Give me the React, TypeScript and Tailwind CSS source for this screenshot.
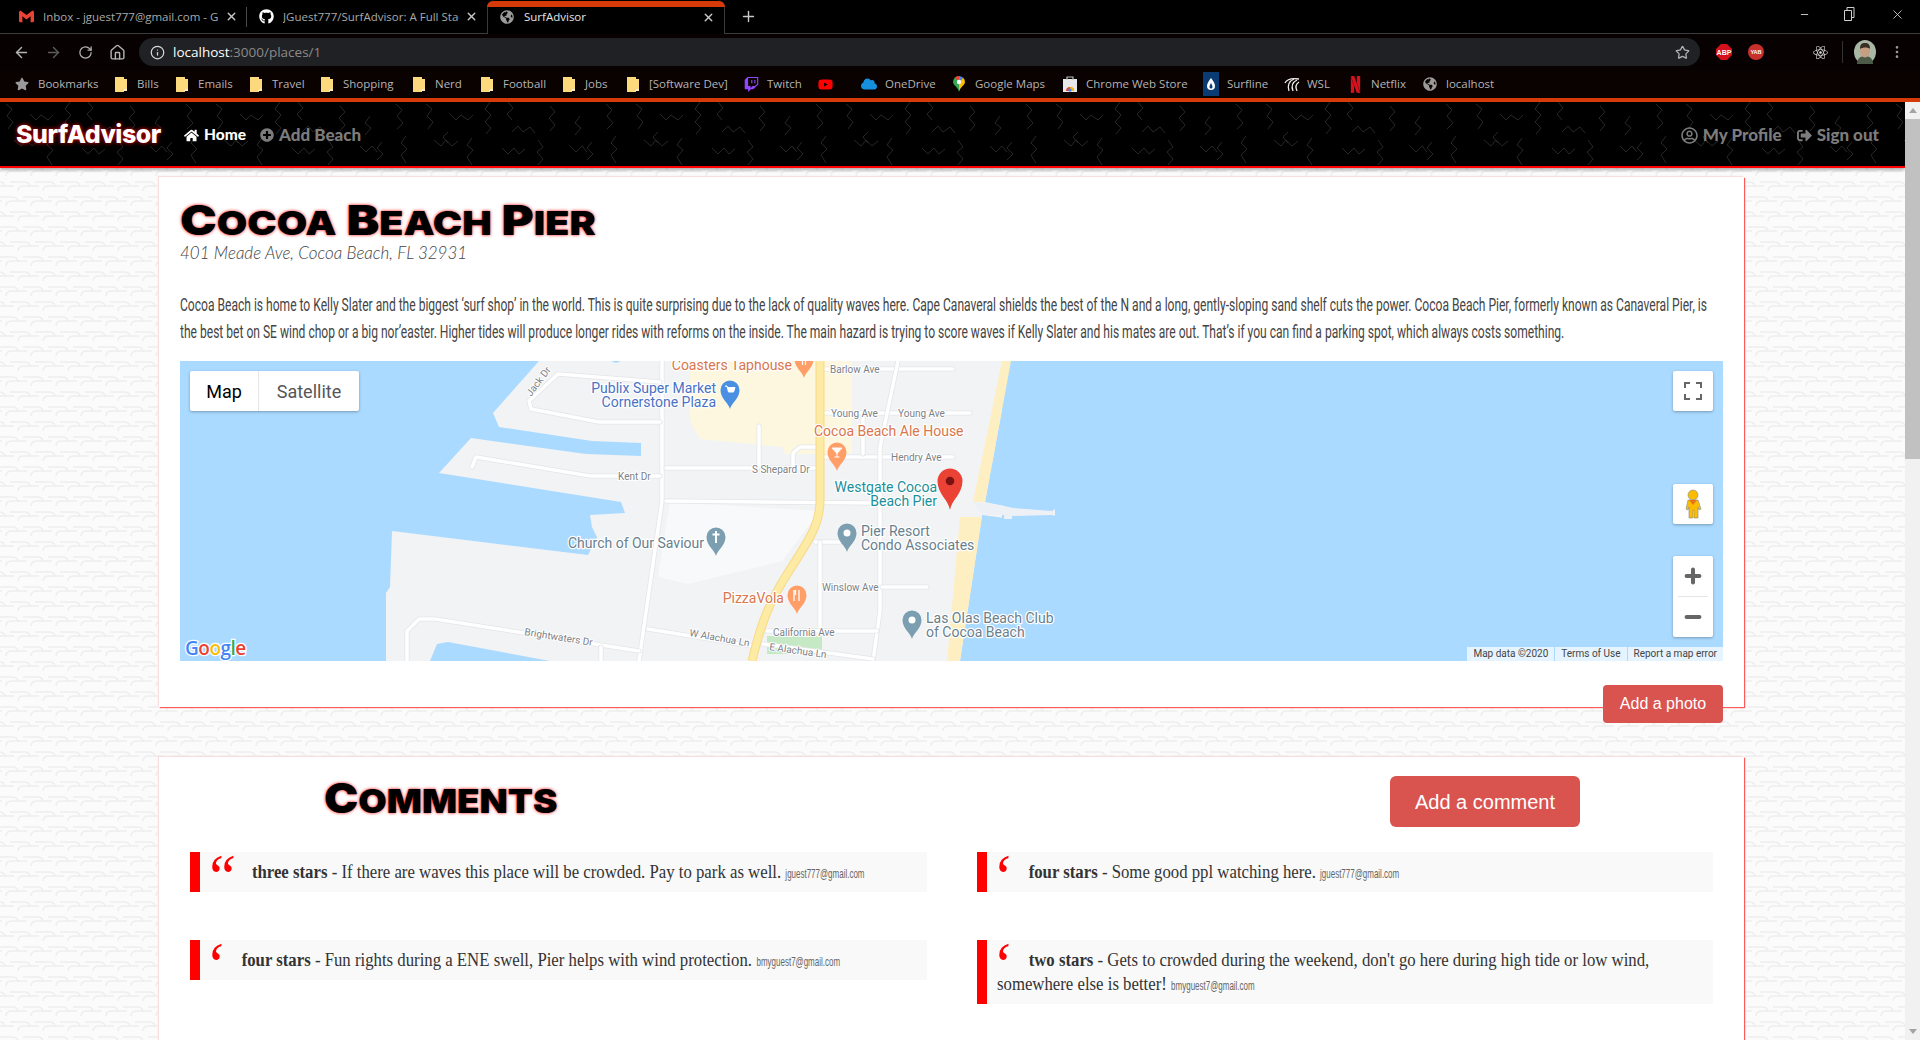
import type { ReactNode } from "react";
import { ArrowLeft, ArrowRight, EllipsisVertical, House, Info, Minus, Plus, RotateCw, Star, X } from "lucide-react";
import { FaCloud, FaGithub, FaGlobeAmericas, FaHome, FaPlusCircle, FaReact, FaRegUserCircle, FaSignOutAlt, FaStar, FaTwitch, FaYoutube } from "react-icons/fa";
import { SiGmail, SiNetflix } from "react-icons/si";

function Folder() {
  return (
    <svg width="12" height="16" viewBox="0 0 12 16">
      <path d="M0 1h9v2h3v12H9v1H0z" fill="#fdd97e" />
      <path d="M9 15v-1h3" fill="none" stroke="#fff" strokeWidth="1" />
    </svg>
  );
}

function MapsPin() {
  return (
    <svg width="12" height="16" viewBox="0 0 12 16">
      <path d="M6 16C5 11 0 9 0 6a6 6 0 0 1 6-6z" fill="#34a853" />
      <path d="M6 16c1-5 6-7 6-10a6 6 0 0 0-2-4.400L6 6z" fill="#fbbc04" />
      <path d="M6 0a6 6 0 0 1 4 1.600L6 6z" fill="#4285f4" />
      <path d="M6 0a6 6 0 0 0-4.300 1.800L6 6z" fill="#ea4335" />
      <circle cx="6" cy="6" r="2.200" fill="#fff" />
    </svg>
  );
}

function StoreBag() {
  return (
    <svg width="14" height="16" viewBox="0 0 14 16">
      <rect x="0" y="3" width="14" height="13" fill="#e8e8e8" />
      <path d="M4 4V1h6v3" fill="none" stroke="#bbb" strokeWidth="1.200" />
      <path d="M3 15a4 4 0 0 1 8 0z" fill="#ea4335" />
      <path d="M7 15v-4a4 4 0 0 1 4 4z" fill="#fbbc04" />
      <circle cx="7" cy="14" r="1.700" fill="#4285f4" />
    </svg>
  );
}

function SurflineIcon() {
  return (
    <svg width="16" height="24" viewBox="0 0 16 24">
      <rect width="16" height="24" fill="#0b3b73" />
      <path d="M8 6c2 3 4 5 4 8a4 4 0 0 1-8 0c0-3 2-5 4-8z" fill="#fff" />
      <path d="M8 11c1 2 1.500 3 1.500 4a1.500 1.500 0 0 1-3 0c0-1 .5-2 1.500-4z" fill="#0b3b73" />
    </svg>
  );
}

function WslIcon() {
  return (
    <svg width="16" height="16" viewBox="0 0 16 16" fill="none" stroke="#eee" strokeWidth="1.300">
      <path d="M1 7c2-4 7-5 14-4" />
      <path d="M5 15C3 10 5 5 10 3" />
      <path d="M9 15C7 10 9 6 13 4" />
      <path d="M13 15c-2-4-1-7 2-9" />
    </svg>
  );
}

const bookmarks: { label: string; item: string; box: string; icon: ReactNode }[] = [
  { label: "Bookmarks", item: "w-[100px]", box: "w-[23px]", icon: <FaStar className="text-[14px] text-[#9a9a9a]" /> },
  { label: "Bills", item: "w-[61px]", box: "w-[22px]", icon: <Folder /> },
  { label: "Emails", item: "w-[74px]", box: "w-[22px]", icon: <Folder /> },
  { label: "Travel", item: "w-[71px]", box: "w-[22px]", icon: <Folder /> },
  { label: "Shopping", item: "w-[92px]", box: "w-[22px]", icon: <Folder /> },
  { label: "Nerd", item: "w-[68px]", box: "w-[22px]", icon: <Folder /> },
  { label: "Football", item: "w-[82px]", box: "w-[22px]", icon: <Folder /> },
  { label: "Jobs", item: "w-[64px]", box: "w-[22px]", icon: <Folder /> },
  { label: "[Software Dev]", item: "w-[117px]", box: "w-[22px]", icon: <Folder /> },
  { label: "Twitch", item: "w-[74px]", box: "w-[23px]", icon: <FaTwitch className="text-[15px] text-[#9146ff]" /> },
  { label: "", item: "w-[43px]", box: "w-[23px]", icon: <FaYoutube className="text-[15px] text-[#f00]" /> },
  { label: "OneDrive", item: "w-[92px]", box: "w-[24px]", icon: <FaCloud className="text-[16px] text-[#1490df]" /> },
  { label: "Google Maps", item: "w-[110px]", box: "w-[22px]", icon: <MapsPin /> },
  { label: "Chrome Web Store", item: "w-[140px]", box: "w-[23px]", icon: <StoreBag /> },
  { label: "Surfline", item: "w-[81px]", box: "w-[24px]", icon: <SurflineIcon /> },
  { label: "WSL", item: "w-[66px]", box: "w-[23px]", icon: <WslIcon /> },
  { label: "Netflix", item: "w-[73px]", box: "w-[21px]", icon: <SiNetflix className="text-[17px] text-[#d8121c] -ml-[3px]" /> },
  { label: "localhost", item: "w-[90px]", box: "w-[23px]", icon: <FaGlobeAmericas className="text-[14px] text-[#9a9a9a]" /> },
];

function Tab(props: { width: string; icon: ReactNode; label: string; active?: boolean; divider?: boolean }) {
  return (
    <div
      className={
        props.active
          ? "relative -mb-px flex h-[34px] items-center rounded-t-[8px] border-x border-[#3a3a3a] bg-black pl-[12px] pr-[9px] " + props.width
          : "relative flex h-[33px] items-center pl-[12px] pr-[9px] " + props.width
      }
    >
      {props.active && <div className="absolute -left-px -right-px top-px h-[6px] rounded-t-[8px] bg-[#d63a08]" />}
      <div className="flex w-[24px] shrink-0 items-center">{props.icon}</div>
      <div className={props.active ? "flex-1 overflow-hidden whitespace-nowrap text-[#e4e4e4]" : "flex-1 overflow-hidden whitespace-nowrap text-[#a8a8a8]"}>
        {props.label}
      </div>
      <X size={13} strokeWidth={2.5} className="ml-[6px] shrink-0 text-[#c8c8c8]" />
      {props.divider && <div className="absolute right-0 top-[7px] h-[20px] w-px bg-[#4a4a4a]" />}
    </div>
  );
}

function BrowserChrome() {
  return (
    <div className="font-['Open_Sans',sans-serif] text-[11.5px]">
      <div className="flex h-[34px] items-start border-b border-[#3c3c3c] bg-black pl-[7px]">
        <Tab width="w-[240px]" label="Inbox - jguest777@gmail.com - Gmail" divider icon={<SiGmail className="text-[15px] text-[#ea4335]" />} />
        <Tab width="w-[240px]" label="JGuest777/SurfAdvisor: A Full Stack" icon={<FaGithub className="text-[15px] text-white" />} />
        <Tab width="w-[238px]" label="SurfAdvisor" active icon={<FaGlobeAmericas className="text-[14px] text-[#9a9a9a]" />} />
        <div className="flex h-[33px] w-[46px] items-center justify-center">
          <Plus size={17} className="text-[#c8c8c8]" />
        </div>
        <div className="ml-auto flex h-[28px] items-center text-[#d0d0d0]">
          <Minus size={11} className="mr-[34px]" />
          <svg width="11" height="14" viewBox="0 0 11 14" fill="none" stroke="currentColor" strokeWidth="1" className="mr-[35px]">
            <path d="M.5 3.500h7v10h-7zM3 3.500V.5h7v10H7.500" />
          </svg>
          <X size={15} strokeWidth={1.4} className="mr-[15px]" />
        </div>
      </div>

      <div className="flex h-[36px] items-start bg-[#080101] pl-[5px] pt-[4px]">
        <div className="flex h-[28px] w-[32px] items-center justify-center text-[#b4b4b4]"><ArrowLeft size={17} /></div>
        <div className="flex h-[28px] w-[32px] items-center justify-center text-[#5c5c5c]"><ArrowRight size={17} /></div>
        <div className="flex h-[28px] w-[32px] items-center justify-center text-[#b4b4b4]"><RotateCw size={15} /></div>
        <div className="flex h-[28px] w-[32px] items-center justify-center text-[#b4b4b4]"><House size={17} /></div>
        <div className="ml-[6px] flex h-[28px] w-[1561px] items-center rounded-full bg-[#202124] pl-[11px] pr-[10px]">
          <Info size={15} className="mr-[8px] text-[#d8d8d8]" />
          <span className="text-[13.5px] text-white">localhost</span>
          <span className="text-[13.5px] text-[#8a8a8a]">:3000/places/1</span>
          <Star size={15} className="ml-auto text-[#b4b4b4]" />
        </div>
        <div className="ml-[8px] flex h-[28px] w-[32px] items-center justify-center">
          <svg width="16" height="16" viewBox="0 0 16 16">
            <path d="M5 0h6l5 5v6l-5 5H5l-5-5V5z" fill="#d3101c" />
            <text x="8" y="10.500" textAnchor="middle" fontSize="7" fontWeight="700" fill="#fff" fontFamily="Liberation Sans">ABP</text>
          </svg>
        </div>
        <div className="flex h-[28px] w-[32px] items-center justify-center">
          <svg width="16" height="16" viewBox="0 0 16 16">
            <circle cx="8" cy="8" r="8" fill="#c8302c" />
            <text x="8" y="10.200" textAnchor="middle" fontSize="5.500" fontWeight="700" fill="#fff" fontFamily="Liberation Sans">YAB</text>
          </svg>
        </div>
        <div className="ml-[32px] flex h-[28px] w-[32px] items-center justify-center text-[#d8d8d8]"><FaReact className="text-[15px]" /></div>
        <div className="ml-[6px] mt-[3px] h-[22px] w-px bg-[#333]" />
        <div className="ml-[6px] flex h-[28px] w-[32px] items-center justify-center">
          <svg width="22" height="24" viewBox="0 0 22 24">
            <ellipse cx="11" cy="12" rx="11" ry="12" fill="#a9b8a4" />
            <path d="M3 24c0-6 4-8 8-8s8 2 8 8z" fill="#4c5a48" />
            <ellipse cx="11" cy="11" rx="5" ry="6.500" fill="#c79f82" />
            <path d="M6 9c0-5 2-6 5-6s5 1 5 6c-2-2-7-2-10 0z" fill="#3a2f25" />
          </svg>
        </div>
        <div className="flex h-[28px] w-[32px] items-center justify-center text-[#9a9a9a]"><EllipsisVertical size={16} /></div>
      </div>

      <div className="flex h-[28px] items-center bg-[#0a0101] pl-[15px] text-[#b4b4b4]">
        {bookmarks.map((b) => (
          <div key={b.label + b.item} className={"flex shrink-0 items-center whitespace-nowrap " + b.item}>
            <div className={"flex shrink-0 items-center " + b.box}>{b.icon}</div>
            {b.label}
          </div>
        ))}
      </div>
      <div className="h-[4px] bg-[#d63a08]" />
    </div>
  );
}

function NavTexture() {
  return (
    <svg className="absolute inset-0 h-full w-full" aria-hidden="true">
      <defs>
        <pattern id="squiggle" width="210" height="64" patternUnits="userSpaceOnUse">
          <g fill="none" stroke="#262626" strokeWidth="1">
            <path d="M6 2l6 5-5 7 6 6-5 7" />
            <path d="M30 12l6 6 5-5 7 5 5-5" />
            <path d="M70 0l-5 7 6 6-6 7 6 6-5 6" />
            <path d="M92 30l6-6 5 6 7-5 5 6" />
            <path d="M130 4l5 6-6 6 6 7-5 6" />
            <path d="M160 14l-5 7 6 5-6 7" />
            <path d="M186 2l6 6-5 6 6 7-6 6" />
            <path d="M14 38l7 6 5-6 6 6 6-5" />
            <path d="M52 36l-5 7 6 5-6 7 5 8" />
            <path d="M82 46l6 6 6-6 5 6 6-5" />
            <path d="M118 38l5 7-6 5 6 7-5 6" />
            <path d="M150 44l6 6 6-6 5 6" />
            <path d="M196 34l-5 7 6 6-6 6 5 8" />
            <path d="M88 0l5 6-6 6 5 6" />
            <path d="M172 40l-5 6 6 6-6 6" />
            <path d="M28 30l-5 5 5 6" />
          </g>
        </pattern>
      </defs>
      <rect width="100%" height="100%" fill="url(#squiggle)" />
    </svg>
  );
}

function NavBar() {
  const idle = "flex items-center gap-[5px] text-[#7c7c7c]";
  return (
    <div className="relative flex h-[66px] items-center border-b-2 border-[#f00] bg-black pt-[2px] font-['Lato',sans-serif] text-[17px] font-black shadow-[0_2px_3px_rgba(0,0,0,0.3)]">
      <NavTexture />
      <div className="relative ml-[16px] flex w-[168px] font-['Inter',sans-serif] text-[25px] font-extrabold tracking-[-0.5px] text-white [text-shadow:0_0_4px_#f00]">
        SurfAdvisor
      </div>
      <div className="relative flex items-center gap-[5px] text-[15.5px] text-white">
        <FaHome className="text-[15px]" />
        Home
      </div>
      <div className={"relative ml-[14px] " + idle}>
        <FaPlusCircle className="text-[14px]" />
        Add Beach
      </div>
      <div className={"relative ml-auto " + idle}>
        <FaRegUserCircle className="text-[17px]" />
        My Profile
      </div>
      <div className={"relative ml-[15px] mr-[26px] " + idle}>
        <FaSignOutAlt className="text-[15px]" />
        Sign out
      </div>
    </div>
  );
}

function Pin(props: { x: number; y: number; color: string; children?: ReactNode }) {
  return (
    <g transform={`translate(${props.x} ${props.y})`}>
      <path d="M0 19C-1.500 13-9.500 8.500-9.500 0a9.500 9.500 0 0 1 19 0C9.500 8.500 1.500 13 0 19z" fill={props.color} />
      {props.children ?? <circle r="3.500" fill="#fff" />}
    </g>
  );
}

function Road(props: { d: string }) {
  return (
    <>
      <path d={props.d} fill="none" stroke="#e3e5e8" strokeWidth="5" strokeLinejoin="round" strokeLinecap="round" />
      <path d={props.d} fill="none" stroke="#fff" strokeWidth="3.500" strokeLinejoin="round" strokeLinecap="round" />
    </>
  );
}

function Poi(props: { x: number; y: number; color: string; anchor?: "start" | "end"; children: string }) {
  return (
    <text x={props.x} y={props.y} textAnchor={props.anchor ?? "start"} fontSize="14" fill={props.color} stroke="#fff" strokeWidth="2.500" paintOrder="stroke" strokeLinejoin="round">
      {props.children}
    </text>
  );
}

function Street(props: { x: number; y: number; rotate?: number; children: string }) {
  return (
    <text
      x={props.x}
      y={props.y}
      fontSize="10"
      fill="#7c8187"
      stroke="#fff"
      strokeWidth="2"
      paintOrder="stroke"
      strokeLinejoin="round"
      transform={props.rotate ? `rotate(${props.rotate} ${props.x} ${props.y})` : undefined}
    >
      {props.children}
    </text>
  );
}

function MapDrawing() {
  return (
    <svg className="absolute inset-0 block" width="1543" height="300" viewBox="0 0 1543 300" fontFamily="Roboto, sans-serif">
      <rect width="1543" height="300" fill="#aadaff" />
      <path
        d="M359 0L313 52 319 66 412 80 461 82 461 95 406 93 291 77 259 112 441 141 445 152 410 154 412 166 417 176 408 194 212 170 210 226 206 232 206 300 250 300 257 283 268 281 370 300 822 300 822 0z"
        fill="#f2f3f5"
      />
      <path d="M822 0H1543V300H780L802 154 832 158 832 155 875 155 875 148 833 147 805 141 831 0z" fill="#aadaff" />
      <path d="M793 141L802 154H824V158H832V155L872 154 875 155V148L872 150 833 147 820 144z" fill="#edf1f5" />
      <path d="M822 0H831L805 141 793 141zM780 156H802L780 300H767z" fill="#feefc3" />
      <path d="M431 0H441L436 2z" fill="#aadaff" />
      <path d="M510 0V60L520 78 602 86 605 93H672V0z" fill="#fef7e0" />
      <path d="M490 141L640 150 602 200 508 223 478 216z" fill="#f8f9fa" />
      <rect x="587" y="275" width="55" height="18" fill="#c5e8c5" />

      <Road d="M482 0V140L459 300" />
      <Road d="M480 21L378 13 349 40 351 48 419 61H480" />
      <Road d="M292 106L296 96 410 115H480" />
      <Road d="M486 107H636" />
      <Road d="M486 140L695 142" />
      <Road d="M579 65V106" />
      <Road d="M613 106V92L620 86H636" />
      <Road d="M227 300V270L239 258H255L459 290" />
      <Road d="M421 286V300" />
      <Road d="M468 268L578 286" />
      <Road d="M645 8H773" />
      <Road d="M645 52H790" />
      <Road d="M643 96H773" />
      <Road d="M718 0L700 86V250L693 300" />
      <Road d="M683 56V93" />
      <Road d="M635 181H660" />
      <Road d="M640 181V268" />
      <Road d="M702 226H747" />
      <Road d="M587 270H697" />
      <Road d="M583 283L693 298" />
      <path d="M640 0V140C640 170 620 190 600 225 585 250 578 275 572 300" fill="none" stroke="#f7d98a" strokeWidth="9" />
      <path d="M640 0V140C640 170 620 190 600 225 585 250 578 275 572 300" fill="none" stroke="#fdeaa3" strokeWidth="7" />

      <Street x={351} y={36} rotate={-53}>Jack Dr</Street>
      <Street x={438} y={119}>Kent Dr</Street>
      <Street x={572} y={112}>S Shepard Dr</Street>
      <Street x={650} y={12}>Barlow Ave</Street>
      <Street x={651} y={56}>Young Ave</Street>
      <Street x={718} y={56}>Young Ave</Street>
      <Street x={711} y={100}>Hendry Ave</Street>
      <Street x={642} y={230}>Winslow Ave</Street>
      <Street x={593} y={275}>California Ave</Street>
      <Street x={589} y={289} rotate={8}>E Alachua Ln</Street>
      <Street x={509} y={275} rotate={10}>W Alachua Ln</Street>
      <Street x={344} y={274} rotate={9}>Brightwaters Dr</Street>

      <Poi x={612} y={9} anchor="end" color="#d9764d">Coasters Taphouse</Poi>
      <Poi x={536} y={32} anchor="end" color="#4a72c4">Publix Super Market</Poi>
      <Poi x={536} y={46} anchor="end" color="#4a72c4">Cornerstone Plaza</Poi>
      <Poi x={524} y={187} anchor="end" color="#68808e">Church of Our Saviour</Poi>
      <Poi x={604} y={242} anchor="end" color="#d9764d">PizzaVola</Poi>
      <Poi x={634} y={75} color="#d9764d">Cocoa Beach Ale House</Poi>
      <Poi x={757} y={131} anchor="end" color="#1a8f9c">Westgate Cocoa</Poi>
      <Poi x={757} y={145} anchor="end" color="#1a8f9c">Beach Pier</Poi>
      <Poi x={681} y={175} color="#68808e">Pier Resort</Poi>
      <Poi x={681} y={189} color="#68808e">Condo Associates</Poi>
      <Poi x={746} y={262} color="#68808e">Las Olas Beach Club</Poi>
      <Poi x={746} y={276} color="#68808e">of Cocoa Beach</Poi>

      <Pin x={624} y={-2} color="#ff9e67"><path d="M-3 -1h6M-1.500 0V6M1.500 0V6" stroke="#fff" strokeWidth="1.200" /></Pin>
      <Pin x={550} y={29} color="#4a90e2"><path d="M-5-4h2l1.500 6h5l1.500-4.500h-7" fill="#fff" stroke="#fff" strokeWidth="1" /></Pin>
      <Pin x={536} y={176} color="#7b9eb0"><path d="M0-6V6M-3.500-2.500H3.500" stroke="#fff" strokeWidth="2" /></Pin>
      <Pin x={617} y={234} color="#ff9e67"><path d="M-3-5V0M-1.500-5V0M-3-1V6M2-5V6" stroke="#fff" strokeWidth="1.300" /></Pin>
      <Pin x={657} y={91} color="#ff9e67"><path d="M-5-4H5L0 1.500zM0 1V5M-2.500 5H2.500" fill="#fff" stroke="#fff" strokeWidth="1" /></Pin>
      <Pin x={667} y={172} color="#7b9eb0" />
      <Pin x={732} y={259} color="#7b9eb0" />

      <g transform="translate(770 120)">
        <path d="M0 29C-1.500 19-12.500 13-12.500 0a12.500 12.500 0 0 1 25 0C12.500 13 1.500 19 0 29z" fill="#ea4335" />
        <circle r="4.300" fill="#7a1212" />
      </g>

      <text x="5" y="294" fontFamily="Open Sans, sans-serif" fontSize="19" fontWeight="600" stroke="#fff" strokeWidth="2.500" paintOrder="stroke" letterSpacing="-0.5">
        <tspan fill="#4285f4">G</tspan>
        <tspan fill="#ea4335">o</tspan>
        <tspan fill="#fbbc04">o</tspan>
        <tspan fill="#4285f4">g</tspan>
        <tspan fill="#34a853">l</tspan>
        <tspan fill="#ea4335">e</tspan>
      </text>
    </svg>
  );
}

function MapPanel() {
  const ctrl = "absolute left-[1493px] flex w-[40px] items-center justify-center rounded-[2px] bg-white shadow-[0_1px_3px_rgba(0,0,0,0.3)]";
  return (
    <div className="relative h-[300px] w-[1543px] overflow-hidden font-['Roboto',sans-serif]">
      <MapDrawing />
      <div className="absolute left-[10px] top-[10px] flex h-[40px] rounded-[2px] bg-white text-[18px] shadow-[0_1px_3px_rgba(0,0,0,0.3)]">
        <div className="flex w-[69px] items-center justify-center border-r border-[#e6e6e6] text-black">Map</div>
        <div className="flex w-[100px] items-center justify-center text-[#565656]">Satellite</div>
      </div>
      <div className={ctrl + " top-[10px] h-[40px]"}>
        <svg width="18" height="18" viewBox="0 0 18 18" fill="none" stroke="#666" strokeWidth="2">
          <path d="M1 6V1h5M12 1h5v5M17 12v5h-5M6 17H1v-5" />
        </svg>
      </div>
      <div className={ctrl + " top-[123px] h-[40px]"}>
        <svg width="20" height="30" viewBox="0 0 20 30">
          <circle cx="10" cy="6" r="5" fill="#fbbc04" stroke="#8a8a8a" strokeWidth="0.600" />
          <path d="M5 11h10l3 9-2 1-1-3v11h-4v-8h-1v8H6V18l-1 3-2-1z" fill="#fbbc04" stroke="#8a8a8a" strokeWidth="0.600" />
          <path d="M6 11h8l-4 5z" fill="#e8741a" />
        </svg>
      </div>
      <div className={ctrl + " top-[195px] h-[81px] flex-col"}>
        <div className="flex h-[40px] items-center justify-center text-[#666]">
          <Plus size={22} strokeWidth={4} absoluteStrokeWidth />
        </div>
        <div className="h-px w-[30px] bg-[#e6e6e6]" />
        <div className="flex h-[40px] items-center justify-center text-[#666]">
          <Minus size={22} strokeWidth={4} absoluteStrokeWidth />
        </div>
      </div>
      <div className="absolute bottom-0 right-0 flex h-[14px] gap-px text-[10px] leading-[14px] text-[#444]">
        <div className="bg-white/70 px-[6px]">Map data ©2020</div>
        <div className="bg-white/70 px-[6px]">Terms of Use</div>
        <div className="bg-white/70 px-[6px]">Report a map error</div>
      </div>
    </div>
  );
}

function Quote(props: { wide?: boolean; stars: string; text: string; email: string }) {
  return (
    <div className="border-l-[10px] border-[#f00] bg-[#f9f9f9] px-[10px] py-[8px] text-[#333]">
      <div className="w-[758px] origin-left scale-x-[0.931] font-['Liberation_Serif',serif] text-[18px] leading-[24px]">
        <span
          className={
            props.wide
              ? "-ml-[7px] inline-block w-[52px] align-[-20px] text-[64px] italic leading-[0] text-[#f00]"
              : "-ml-[7px] inline-block w-[41px] align-[-20px] text-[64px] italic leading-[0] text-[#f00]"
          }
        >
          {props.wide ? "“" : "‘"}
        </span>
        <b className="font-semibold">{props.stars}</b> - {props.text}{" "}
        <span className="inline-block origin-left scale-x-[0.66] font-['Liberation_Sans',sans-serif] text-[13px] leading-none text-[#666]">{props.email}</span>
      </div>
    </div>
  );
}

function Caps(props: { text: string }) {
  return (
    <>
      {props.text.split(" ").map((word, i) => (
        <span key={word} className="uppercase">
          {i > 0 && " "}
          {word[0]}
          <span className="text-[0.8em]">{word.slice(1)}</span>
        </span>
      ))}
    </>
  );
}

function PageTexture() {
  return (
    <svg className="absolute inset-0 h-full w-full" aria-hidden="true">
      <defs>
        <pattern id="hooks" width="25" height="30" patternUnits="userSpaceOnUse">
          <g fill="none" stroke="#eeeeee" strokeWidth="1.500">
            <path d="M-2 5H12Q18 5 18 10" />
            <path d="M23 5H27" />
            <path d="M6 14Q6 9 12 9H27" />
            <path d="M-2 9H2" />
            <path d="M10 20H24Q30 20 30 25" />
            <path d="M-15 20H-1Q5 20 5 25" />
            <path d="M18 29Q18 24 24 24H39" />
            <path d="M-7 29Q-7 24 -1 24H14" />
          </g>
        </pattern>
      </defs>
      <rect width="100%" height="100%" fill="#fbfbfb" />
      <rect width="100%" height="100%" fill="url(#hooks)" />
    </svg>
  );
}

export default function App() {
  const card = "relative ml-[159px] w-[1585px] bg-white shadow-[1px_1px_1px_#ff5a5a,-1px_-1px_1px_#f8dede]";
  const heading = "origin-left font-['Inter',sans-serif] text-[41px] font-black leading-[40px] text-black [text-shadow:0_0_3px_#f00]";
  return (
    <div className="h-[1040px] w-[1920px] overflow-hidden bg-white">
      <BrowserChrome />
      <div className="flex h-[938px]">
        <div className="relative w-[1905px] overflow-hidden">
          <PageTexture />
          <div className="relative">
            <NavBar />
            <div className="h-[9px]" />

            <div className={card + " h-[530px] px-[21px] pt-[23px]"}>
              <h1 className={"scale-x-[1.2] " + heading}>
                <Caps text="Cocoa Beach Pier" />
              </h1>
              <p className="-mt-[2px] font-['Lato',sans-serif] text-[17px] font-light italic leading-[24px] text-[#444]">
                401 Meade Ave, Cocoa Beach, FL 32931
              </p>
              <p className="mb-[16px] mt-[26px] w-[2303px] origin-left scale-x-[0.67] font-['Roboto',sans-serif] text-[18px] leading-[27px] text-[#444]">
                Cocoa Beach is home to Kelly Slater and the biggest ‘surf shop’ in the world. This is quite surprising due to the lack of quality waves here. Cape Canaveral shields the best of the N and a long, gently-sloping sand shelf cuts the power. Cocoa Beach Pier, formerly known as Canaveral Pier, is the best bet on SE wind chop or a big nor’easter. Higher tides will produce longer rides with reforms on the inside. The main hazard is trying to score waves if Kelly Slater and his mates are out. That’s if you can find a parking spot, which always costs something.
              </p>
              <MapPanel />
              <div className="mt-[24px] flex justify-end">
                <div className="flex h-[38px] w-[120px] items-center justify-center rounded-[4px] bg-[#d9534f] font-['Liberation_Sans',sans-serif] text-[16px] text-white">
                  Add a photo
                </div>
              </div>
            </div>

            <div className={card + " mt-[50px] h-[400px]"}>
              <div className="flex items-start pl-[165px] pr-[164px] pt-[19px]">
                <h2 className={"mt-[2px] scale-x-[1.12] " + heading}>
                  <Caps text="Comments" />
                </h2>
                <div className="ml-auto flex h-[51px] w-[190px] items-center justify-center rounded-[6px] bg-[#d9534f] font-['Liberation_Sans',sans-serif] text-[20px] text-white">
                  Add a comment
                </div>
              </div>
              <div className="mt-[25px] grid grid-cols-2 items-start gap-x-[50px] gap-y-[48px] pl-[31px] pr-[31px]">
                <Quote wide stars="three stars" text="If there are waves this place will be crowded. Pay to park as well." email="jguest777@gmail.com" />
                <Quote stars="four stars" text="Some good ppl watching here." email="jguest777@gmail.com" />
                <Quote stars="four stars" text="Fun rights during a ENE swell, Pier helps with wind protection." email="bmyguest7@gmail.com" />
                <Quote stars="two stars" text="Gets to crowded during the weekend, don't go here during high tide or low wind, somewhere else is better!" email="bmyguest7@gmail.com" />
              </div>
            </div>
          </div>
        </div>
        <div className="relative flex w-[15px] flex-col items-center bg-[#f1f1f1]">
          <div className="flex h-[17px] w-full items-center justify-center">
            <div className="h-0 w-0 border-x-[4px] border-b-[5px] border-x-transparent border-b-[#a3a3a3]" />
          </div>
          <div className="h-[340px] w-full bg-[#c1c1c1]" />
          <div className="mt-auto flex h-[17px] w-full items-center justify-center">
            <div className="h-0 w-0 border-x-[4px] border-t-[5px] border-x-transparent border-t-[#a3a3a3]" />
          </div>
        </div>
      </div>
    </div>
  );
}
